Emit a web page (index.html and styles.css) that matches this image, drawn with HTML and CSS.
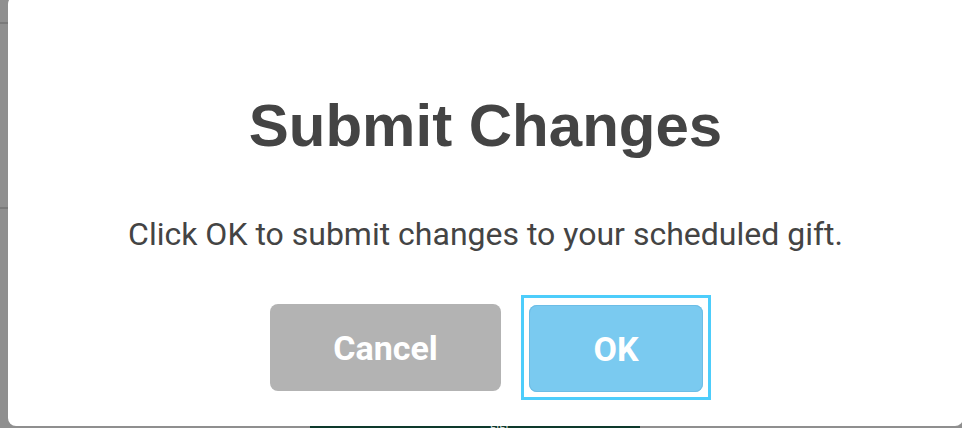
FILE: index.html
```html
<!DOCTYPE html>
<html lang="en">
<head>
    <meta charset="UTF-8">
    <meta name="viewport" content="width=device-width, initial-scale=1.0">
    <title>Submit Changes</title>
    <link rel="stylesheet" href="styles.css">
</head>
<body>

<!-- page behind the overlay -->
<div class="page">
    <div class="rule"></div>
    <div class="rule rule-low"></div>
    <div class="footer-bar"><span>ыы</span></div>
</div>

<div class="modal" role="dialog" aria-labelledby="modalTitle">
    <h2 id="modalTitle">Submit Changes</h2>
    <p class="message">Click OK to submit changes to your scheduled gift.</p>
    <div class="button-group">
        <button type="button" class="btn btn-cancel">Cancel</button>
        <span class="focus-ring">
            <button type="button" class="btn btn-ok">OK</button>
        </span>
    </div>
</div>

</body>
</html>
```

FILE: styles.css
```css
body {
    margin: 0;
    height: 428px;
    overflow: hidden;
    position: relative;
    background-color: #8f8f8f;
    font-family: Roboto, "Liberation Sans", sans-serif;
}
.page {
    height: 428px;
    display: flex;
    flex-direction: column;
    padding-top: 22px;
    box-sizing: border-box;
}
.rule {
    height: 2px;
    background-color: #7a7a7a;
}
.rule-low {
    margin-top: 183px;
}
.footer-bar {
    margin-top: auto;
    margin-left: 310px;
    width: 330px;
    height: 2px;
    background-color: #0e3a2c;
    overflow: hidden;
    color: #cfd8d4;
    font-size: 12px;
    line-height: 4px;
    padding-left: 180px;
    box-sizing: border-box;
}
.modal {
    position: absolute;
    left: 8px;
    top: -4px;
    width: 955px;
    height: 430px;
    box-sizing: border-box;
    padding-top: 95px;
    background-color: #fff;
    border-radius: 8px;
    text-align: center;
    color: #444;
}
h2 {
    margin: 0;
    font-family: "Liberation Sans", Arial, sans-serif;
    font-size: 60px;
    line-height: 70px;
    font-weight: bold;
}
.message {
    margin: 53px 0 0;
    font-size: 32px;
    line-height: 40px;
}
.button-group {
    display: flex;
    justify-content: center;
    align-items: center;
    gap: 20px;
    margin-top: 41px;
    padding-left: 10px;
}
.btn {
    display: block;
    height: 87px;
    border: none;
    border-radius: 8px;
    color: #fff;
    font-family: Roboto, sans-serif;
    font-weight: bold;
    font-size: 34px;
    cursor: pointer;
}
.btn-cancel {
    width: 231px;
    background-color: #b3b3b3;
}
.focus-ring {
    display: block;
    padding: 7px 5px 5px;
    border: 3px solid #4dcdfb;
}
.btn-ok {
    width: 174px;
    background-color: #7acaf0;
    box-shadow: inset 0 0 0 1px #6cbde6;
}
```
